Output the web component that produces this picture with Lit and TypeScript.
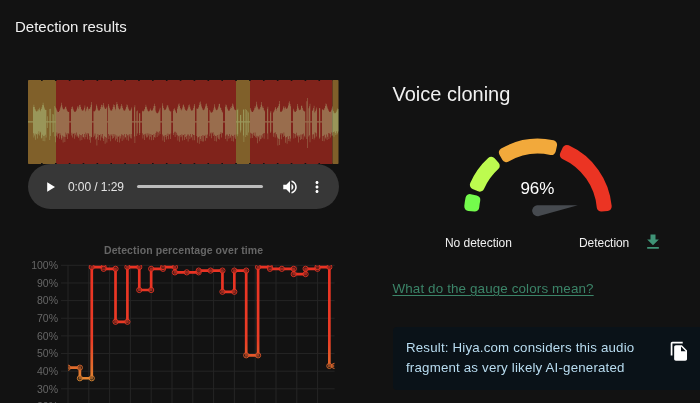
import { LitElement, html, css, svg } from 'lit';
import { customElement, property } from 'lit/decorators.js';

type Region = { start: number; end: number; level: 'alert' | 'warn' };
// [start, end, amplitude], in pixels from the left edge of the strip
type Burst = [number, number, number];

const REGIONS: Region[] = [
	{ start: 0, end: 28, level: 'warn' },
	{ start: 28, end: 208, level: 'alert' },
	{ start: 208, end: 222, level: 'warn' },
	{ start: 222, end: 304.5, level: 'alert' },
	{ start: 304.5, end: 310.5, level: 'warn' },
];

const BURSTS: Burst[] = [
	[5, 10, 17], [10, 13, 14], [13, 18, 19], [19, 19.6, 9], [21.5, 22.5, 21], [24.5, 25.5, 12], [26.5, 27.5, 22],
	[28, 33, 16], [33, 37, 20], [37, 41, 16], [43, 50, 16], [50, 57, 18], [57, 61, 16], [61, 64, 21],
	[65.5, 68, 17], [68, 69, 25], [69, 75, 18], [75, 79, 21], [80, 88, 18], [88, 92, 20], [92, 104, 18],
	[106, 107, 22], [108.5, 109.5, 17], [111, 112, 14], [114, 122, 17], [122, 127, 18], [127, 132, 14],
	[134, 139, 19], [139, 143, 17], [145, 149, 14], [149, 153, 19], [153, 158, 18], [158, 167, 18],
	[168.5, 174, 21], [174, 180, 19], [181.5, 186, 15], [186, 192, 19], [192, 195, 15], [197, 203, 18],
	[203, 208, 19], [209, 210, 18], [212, 213, 11], [215, 216, 20], [217.5, 218.5, 19], [219.5, 220.5, 14],
	[222, 228, 16], [228, 234, 20], [234, 237, 16], [239, 240, 17], [242, 243, 14], [245, 249, 15],
	[249, 252, 23], [252, 257, 16], [257, 263, 21], [265, 269, 16], [269, 273, 19], [273, 277, 17],
	[278.5, 279.5, 25], [280.5, 282, 19], [284, 286, 17], [286, 289, 15], [291, 292, 22], [294, 300, 19],
	[300, 304.5, 16], [304.5, 310.5, 14],
];

// detection percentage for each audio fragment
const SCORES = [42, 36, 99, 98, 68, 99, 86, 98, 99, 96, 96, 97, 97, 85, 97, 49, 99, 98, 98, 95, 98, 99, 43];

const GAUGE = [
	{ from: 1.2, to: 15.6, color: '#74fb4c' },
	{ from: 19.8, to: 51.6, color: '#bdfb4f' },
	{ from: 56.2, to: 106, color: '#f2a93b' },
	{ from: 110.6, to: 178.8, color: '#eb3423' },
];

@customElement('wave-strip')
class WaveStrip extends LitElement {
	static styles = css`
		:host {
			display: block;
		}

		svg {
			display: block;
		}

		.alert {
			fill: #80231b;
		}

		.warn {
			fill: #80602a;
		}

		.wave {
			fill: rgb(51, 86, 56);
			mix-blend-mode: screen;
		}

		.tick {
			fill: #121212;
		}
	`;

	bars() {
		let d = 'M0 41.2H310.5V42.6H0Z';
		BURSTS.forEach(([start, end, amp], i) => {
			for (let x = start, n = 0; x < end - 0.05; x += 0.6, n++) {
				const jitter = Math.abs(Math.sin((i + 1) * 12.9 + n * 78.2));
				const up = amp * (1.02 - jitter * 0.4);
				const down = amp * (1.08 - Math.abs(Math.cos(n * 4.3 + i * 2.1)) * 0.42);
				d += `M${x.toFixed(2)} ${(42 - up).toFixed(1)}h.6V${(42 + down).toFixed(1)}h-.6Z`;
			}
		});
		return d;
	}

	render() {
		const ticks = Array.from({ length: 21 }, (_, i) => (i + 1) * 13.87);
		return html`
			<svg width="310.5" height="84" viewBox="0 0 310.5 84">
				${REGIONS.map(r => svg`<rect class=${r.level} x=${r.start} width=${r.end - r.start} height="84" rx=".7" />`)}
				<path class="wave" d=${this.bars()} />
				${ticks.map(x => svg`<path class="tick" d="M${x - 0.8} 0h1.6v.9h-1.6zM${x - 0.8} 83.1h1.6v.9h-1.6z" />`)}
			</svg>
		`;
	}
}

@customElement('audio-bar')
class AudioBar extends LitElement {
	@property() time = '';

	static styles = css`
		:host {
			display: flex;
			align-items: center;
			box-sizing: border-box;
			height: 45px;
			padding-left: 18px;
			border-radius: 23px;
			background: #373737;
			color: #e4e4e4;
			font-size: 12px;
		}

		svg {
			display: block;
			flex: none;
			fill: #fff;
		}

		.time {
			flex: none;
			width: 57px;
			margin-left: 12px;
			white-space: nowrap;
			letter-spacing: -0.08px;
		}

		.track {
			flex: none;
			width: 126px;
			height: 3.4px;
			margin: 0 18px 0 12px;
			border-radius: 2px;
			background: #bcbcbc;
		}

		.more {
			margin-left: 9px;
		}
	`;

	render() {
		return html`
			<svg width="10" height="12" viewBox="0 0 10 12"><path d="M1.2 1.3 9 6 1.2 10.8Z" /></svg>
			<span class="time">${this.time}</span>
			<div class="track"></div>
			<svg width="18" height="18" viewBox="0 0 24 24">
				<path d="M3 9v6h4l5 5V4L7 9H3zm13.5 3c0-1.77-1.02-3.29-2.5-4.03v8.05c1.48-.73 2.5-2.25 2.5-4.02zM14 3.23v2.06c2.89.86 5 3.54 5 6.71s-2.11 5.85-5 6.71v2.06c4.01-.91 7-4.49 7-8.77s-2.99-7.86-7-8.77z" />
			</svg>
			<svg class="more" width="18" height="18" viewBox="0 0 24 24">
				<path d="M12 8c1.1 0 2-.9 2-2s-.9-2-2-2-2 .9-2 2 .9 2 2 2zm0 2c-1.1 0-2 .9-2 2s.9 2 2 2 2-.9 2-2-.9-2-2-2zm0 6c-1.1 0-2 .9-2 2s.9 2 2 2 2-.9 2-2-.9-2-2-2z" />
			</svg>
		`;
	}
}

@customElement('score-chart')
class ScoreChart extends LitElement {
	static styles = css`
		:host {
			display: block;
		}

		svg {
			display: block;
		}

		.title {
			fill: #666;
			font-size: 10.5px;
			font-weight: bold;
		}

		.label {
			fill: #666;
			font-size: 10.5px;
			text-anchor: end;
		}

		.grid {
			stroke: #252525;
			fill: none;
		}

		.line {
			fill: none;
			stroke: url(#heat);
			stroke-width: 2.7;
		}

		.dot {
			fill: #121212;
			fill-opacity: 0.35;
			stroke: url(#heat);
			stroke-width: 0.9;
		}
	`;

	x(i: number) {
		return 40 + i * 11.88;
	}

	y(score: number) {
		return 25.3 + (100 - score) * 1.765;
	}

	render() {
		const rows = [100, 90, 80, 70, 60, 50, 40, 30, 20];
		const cols = Array.from({ length: 13 }, (_, i) => 40 + i * 20.8);
		let d = `M${this.x(0)} ${this.y(SCORES[0])}`;
		const dots: number[][] = [];
		SCORES.forEach((score, i) => {
			const next = i === SCORES.length - 1 ? 306.3 : this.x(i + 1);
			d += `V${this.y(score)}H${next}`;
			dots.push([this.x(i), this.y(score)]);
			// flat runs share one marker
			if (SCORES[i + 1] !== score) {
				dots.push([next, this.y(score)]);
			}
		});

		return html`
			<svg width="312" height="163" viewBox="0 0 312 163">
				<defs>
					<linearGradient id="heat" gradientUnits="userSpaceOnUse" x1="0" y1="25" x2="0" y2="150">
						<stop offset="0" stop-color="#ea3223" />
						<stop offset=".6" stop-color="#ea3d26" />
						<stop offset=".84" stop-color="#e0702d" />
						<stop offset="1" stop-color="#eda83a" />
					</linearGradient>
					<clipPath id="area"><rect x="40" y="25" width="266.6" height="138" /></clipPath>
				</defs>
				<text class="title" x="76" y="14.4" textLength="159" lengthAdjust="spacing">Detection percentage over time</text>
				${rows.map(v => svg`
					<path class="grid" d="M33 ${this.y(v)}H306.6" />
					<text class="label" x="30" y=${this.y(v) + 3.8}>${v}%</text>
				`)}
				${cols.map(x => svg`<path class="grid" d="M${x} 25V163" />`)}
				<g clip-path="url(#area)">
					<path class="line" d=${d} />
					${dots.map(([x, y]) => svg`<circle class="dot" cx=${x} cy=${y} r="2.6" />`)}
				</g>
			</svg>
		`;
	}
}

@customElement('score-gauge')
class ScoreGauge extends LitElement {
	@property({ type: Number }) value = 0;

	static styles = css`
		:host {
			display: block;
		}

		svg {
			display: block;
		}

		.segment {
			stroke-width: 9;
			stroke-linejoin: round;
		}

		.needle {
			fill: #464a4f;
		}

		.value {
			fill: #fff;
			font-size: 17px;
			text-anchor: middle;
		}
	`;

	// the path is inset by half the stroke, which rounds its corners
	segment(from: number, to: number) {
		const inset = 3.9;
		const point = (r: number, deg: number) => {
			const a = (deg * Math.PI) / 180;
			return `${(75 - r * Math.cos(a)).toFixed(2)} ${(74.7 - r * Math.sin(a)).toFixed(2)}`;
		};
		const a = from + inset;
		const b = to - inset;
		return `M${point(69.5, a)}A69.5 69.5 0 0 1 ${point(69.5, b)}L${point(63.5, b)}A63.5 63.5 0 0 0 ${point(63.5, a)}Z`;
	}

	render() {
		return html`
			<svg width="150" height="80" viewBox="0 0 150 80">
				${GAUGE.map(g => svg`<path class="segment" fill=${g.color} stroke=${g.color} d=${this.segment(g.from, g.to)} />`)}
				<path class="needle" d="M114.8 67.2 74 67.2A5.5 5.5 0 1 0 76 78Z" />
				<text class="value" x="74.4" y="55.6">${this.value}%</text>
			</svg>
		`;
	}
}

@customElement('app-root')
class AppRoot extends LitElement {
	static styles = css`
		:host {
			display: block;
			box-sizing: border-box;
			width: 700px;
			height: 403px;
			overflow: hidden;
			background: #121212;
			color: #f0f0f0;
			font-family: "Liberation Sans", Arial, sans-serif;
		}

		h1,
		h2,
		p {
			margin: 0;
			font-weight: normal;
		}

		h1 {
			padding: 17px 0 0 15px;
			font-size: 15px;
			line-height: 20px;
		}

		.columns {
			display: grid;
			grid-template-columns: 312px 308px;
			column-gap: 52.5px;
			padding: 43px 0 0 28px;
		}

		audio-bar {
			width: 311px;
		}

		score-chart {
			margin-top: 31px;
		}

		h2 {
			padding-top: 2px;
			font-size: 20px;
			line-height: 24px;
		}

		score-gauge {
			margin: 32px 0 0 70.2px;
		}

		.legend {
			display: flex;
			align-items: center;
			height: 20px;
			margin-top: 14px;
			padding-left: 52.5px;
			font-size: 12px;
			letter-spacing: -0.05px;
		}

		.legend .low {
			width: 134px;
			padding-top: 1px;
		}

		.legend .high {
			width: 63.5px;
			padding-top: 1px;
		}

		.download {
			fill: #3f9376;
		}

		.link {
			display: block;
			margin-top: 27px;
			color: #3b8468;
			font-size: 13.4px;
			line-height: 20px;
			text-decoration: underline;
			text-decoration-thickness: 1px;
			text-underline-offset: 2px;
			letter-spacing: 0.13px;
		}

		.result {
			display: flex;
			align-items: flex-start;
			height: 63px;
			box-sizing: border-box;
			margin-top: 28px;
			padding: 11px 0 0 13.5px;
			border-radius: 4px 0 0 4px;
			background: #0a1218;
			color: #b8dcf0;
			font-size: 13.3px;
			line-height: 20px;
			letter-spacing: 0.18px;
		}

		.result p {
			width: 262.7px;
		}

		.copy {
			margin-top: 3px;
			fill: #fff;
		}
	`;

	render() {
		return html`
			<h1>Detection results</h1>
			<div class="columns">
				<section>
					<wave-strip></wave-strip>
					<audio-bar time="0:00 / 1:29"></audio-bar>
					<score-chart></score-chart>
				</section>
				<section>
					<h2>Voice cloning</h2>
					<score-gauge value="96"></score-gauge>
					<div class="legend">
						<span class="low">No detection</span>
						<span class="high">Detection</span>
						<svg class="download" width="20" height="20" viewBox="0 0 24 24">
							<path d="M19 9h-4V3H9v6H5l7 7 7-7zM5 18v2h14v-2H5z" />
						</svg>
					</div>
					<a class="link">What do the gauge colors mean?</a>
					<div class="result">
						<p>Result: Hiya.com considers this audio<br>fragment as very likely AI-generated</p>
						<svg class="copy" width="20.6" height="20.6" viewBox="0 0 24 24">
							<path d="M16 1H4c-1.1 0-2 .9-2 2v14h2V3h12V1zm-1 4l6 6v10c0 1.1-.9 2-2 2H7.99C6.89 23 6 22.1 6 21l.01-14c0-1.1.89-2 1.99-2h7zm-1 7h5.5L14 6.5V12z" />
						</svg>
					</div>
				</section>
			</div>
		`;
	}
}

export { AppRoot, WaveStrip, AudioBar, ScoreChart, ScoreGauge };
